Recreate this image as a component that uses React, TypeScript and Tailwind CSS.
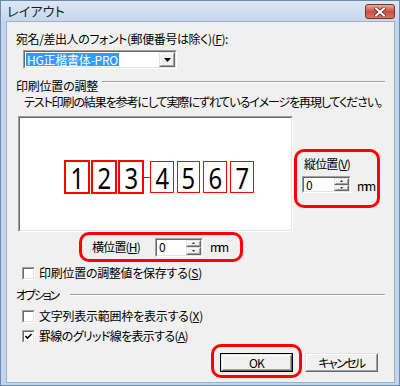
import React, { useLayoutEffect, useRef, useState } from "react";

function Fit({ w, children, className }: { w: number; children: React.ReactNode; className?: string }) {
  const ref = useRef<HTMLSpanElement>(null);
  const [ls, setLs] = useState(0);
  useLayoutEffect(() => {
    const measure = () => {
      const el = ref.current;
      if (!el) return;
      const prev = el.style.letterSpacing;
      el.style.letterSpacing = "0px";
      const natural = el.getBoundingClientRect().width;
      el.style.letterSpacing = prev;
      const n = Array.from(el.textContent ?? "").length || 1;
      setLs((w - natural) / n);
    };
    measure();
    if (document.fonts && document.fonts.ready) document.fonts.ready.then(measure);
  }, [w]);
  return (
    <span ref={ref} className={"inline-block whitespace-nowrap " + (className ?? "")} style={{ letterSpacing: `${ls}px` }}>
      {children}
    </span>
  );
}

const U = ({ c }: { c: string }) => (
  <span className="underline underline-offset-[1px] decoration-[1px]">{c}</span>
);

function Sunken({ className, children }: { className?: string; children?: React.ReactNode }) {
  return (
    <div className={"shrink-0 border border-t-[#a0a0a0] border-l-[#a0a0a0] border-b-white border-r-white " + (className ?? "")}>
      <div className="h-full w-full border border-t-[#696969] border-l-[#696969] border-b-[#e3e3e3] border-r-[#e3e3e3] bg-white flex">
        {children}
      </div>
    </div>
  );
}

function Raised({ className, children }: { className?: string; children?: React.ReactNode }) {
  return (
    <div className={"border border-t-[#e3e3e3] border-l-[#e3e3e3] border-b-[#696969] border-r-[#696969] bg-[#f0f0f0] " + (className ?? "")}>
      <div className="h-full w-full border border-t-white border-l-white border-b-[#a0a0a0] border-r-[#a0a0a0] flex items-center justify-center">
        {children}
      </div>
    </div>
  );
}

function Spin({ className }: { className?: string }) {
  return (
    <Sunken className={className}>
      <div className="flex-1 pl-[2px] flex items-center text-[12px] leading-none">0</div>
      <div className="w-[15px] flex flex-col">
        <Raised className="flex-1">
          <svg width="3" height="2" viewBox="0 0 3 2"><path d="M1.5 0 L3 2 L0 2 Z" fill="#333" /></svg>
        </Raised>
        <Raised className="flex-1">
          <svg width="3" height="2" viewBox="0 0 3 2"><path d="M0 0 L3 0 L1.5 2 Z" fill="#333" /></svg>
        </Raised>
      </div>
    </Sunken>
  );
}

function Check({ checked }: { checked?: boolean }) {
  return (
    <div className="w-[13px] h-[13px] shrink-0 border border-t-[#a0a0a0] border-l-[#a0a0a0] border-b-white border-r-white">
      <div className="w-full h-full border border-t-[#696969] border-l-[#696969] border-b-[#e3e3e3] border-r-[#e3e3e3] bg-white flex items-center justify-center">
        {checked && (
          <svg width="7" height="7" viewBox="0 0 7 7">
            <path d="M0.5 3 L2.5 5.2 L6.5 1" stroke="#000" strokeWidth="1.6" fill="none" />
          </svg>
        )}
      </div>
    </div>
  );
}

function Digit({ d }: { d: string }) {
  return (
    <span className="font-['Noto_Sans',sans-serif] text-[29px] leading-none inline-block scale-x-[0.82] text-black">
      {d}
    </span>
  );
}

function CloseBtn() {
  return (
    <div className="mt-[3px] mr-[4px] w-[30px] h-[15px] rounded-[3px] border border-[#7b3028] bg-linear-to-b from-[#e9a99c] via-[#c9503f] to-[#d9735f] flex items-center justify-center">
      <svg width="12" height="10" viewBox="0 0 12 10">
        <path d="M2 1.5 L10 8.5 M10 1.5 L2 8.5" stroke="#5b2a26" strokeWidth="3.6" strokeLinecap="square" />
        <path d="M2 1.5 L10 8.5 M10 1.5 L2 8.5" stroke="#ffffff" strokeWidth="2" strokeLinecap="square" />
      </svg>
    </div>
  );
}

export default function App() {
  return (
    <div className="w-[400px] h-[386px] flex flex-col border border-[#7089ab] bg-[#c3d5ec] font-['Noto_Sans_CJK_JP',sans-serif] text-[12px] leading-[14px] text-black [font-feature-settings:'palt'] overflow-hidden select-none">
      {/* title bar */}
      <div className="h-[20px] shrink-0 flex items-start bg-linear-to-b from-[#dce7f5] to-[#c5d7ee]">
        <div className="pl-[6px] pt-[2px] text-[13px] leading-[16px] text-[#1b1b1b]">
          <Fit w={58}>レイアウト</Fit>
        </div>
        <div className="flex-1" />
        <CloseBtn />
      </div>

      {/* body */}
      <div className="flex-1 ml-[5px] mr-[4px] mb-[2px] bg-[#f0f0f0] border border-[#9cb1cc] flex flex-col">
        <div className="ml-[9px] mt-[10px] h-[14px]">
          <Fit w={212}>宛名/差出人のフォント(郵便番号は除く)(<U c="F" />):</Fit>
        </div>

        {/* combobox */}
        <Sunken className="ml-[16px] mt-[4px] w-[154px] h-[19px]">
          <div className="flex-1 p-[1px] flex">
            <div className="w-[93px] bg-[#3399ff] text-white flex items-center pl-[1px] whitespace-nowrap">
              <Fit w={91}>HG正楷書体-PRO</Fit>
            </div>
          </div>
          <Raised className="w-[16px]">
            <svg width="7" height="4" viewBox="0 0 7 4"><path d="M0 0 L7 0 L3.5 4 Z" fill="#000" /></svg>
          </Raised>
        </Sunken>

        {/* group header */}
        <div className="ml-[9px] mr-[9px] mt-[10px] h-[14px] flex items-start">
          <div className="w-[86px] shrink-0">
            <Fit w={82}>印刷位置の調整</Fit>
          </div>
          <div className="flex-1 mt-[2px] border-t border-t-[#a0a0a0] border-b border-b-white" />
        </div>

        <div className="ml-[17px] mt-[2px] h-[14px]">
          <Fit w={358}>テスト印刷の結果を参考にして実際にずれているイメージを再現してください。</Fit>
        </div>

        {/* preview row */}
        <div className="ml-[11px] mt-[7px] h-[116px] flex items-start">
          <div className="w-[275px] h-[116px] shrink-0 border border-t-[#a0a0a0] border-l-[#a0a0a0] border-b-white border-r-white">
            <div className="w-full h-full border border-t-[#696969] border-l-[#696969] border-b-[#e3e3e3] border-r-[#e3e3e3] bg-white">
              <div className="ml-[44px] mt-[42px] h-[34px] flex items-center">
                <div className="w-[26px] h-[34px] border-2 border-[#ff0000] flex items-center justify-center"><Digit d="1" /></div>
                <div className="ml-[1px] w-[26px] h-[34px] border-2 border-[#ff0000] flex items-center justify-center"><Digit d="2" /></div>
                <div className="ml-[1px] w-[26px] h-[34px] border-2 border-[#ff0000] flex items-center justify-center"><Digit d="3" /></div>
                <div className="w-[6px] h-[1px] bg-[#ff0000]" />
                <div className="w-[24px] h-[32px] border border-[#ff0000] flex items-center justify-center"><Digit d="4" /></div>
                <div className="ml-[3px] w-[23px] h-[32px] border border-[#ff0000] flex items-center justify-center"><Digit d="5" /></div>
                <div className="ml-[3px] w-[24px] h-[32px] border border-[#ff0000] flex items-center justify-center"><Digit d="6" /></div>
                <div className="ml-[3px] w-[24px] h-[32px] border border-[#ff0000] flex items-center justify-center"><Digit d="7" /></div>
              </div>
            </div>
          </div>

          {/* vertical position */}
          <div className="ml-[1px] mt-[33px] w-[86px] h-[59px] border-[3px] border-[#ff0000] rounded-[10px] pl-[5px] pt-[5px] flex flex-col">
            <div className="ml-[2px] h-[14px]">
              <Fit w={46}>縦位置(<U c="V" />)</Fit>
            </div>
            <div className="mt-[5px] flex items-center">
              <Spin className="w-[49px] h-[17px]" />
              <div className="ml-[6px] mt-[3px]">
                <Fit w={16}>mm</Fit>
              </div>
            </div>
          </div>
        </div>

        {/* horizontal position */}
        <div className="ml-[72px] w-[164px] h-[30px] border-[3px] border-[#ff0000] rounded-[10px] pl-[10px] flex items-center">
          <div className="w-[63px]">
            <Fit w={48}>横位置(<U c="H" />)</Fit>
          </div>
          <Spin className="w-[48px] h-[19px]" />
          <div className="ml-[7px]">
            <Fit w={16}>mm</Fit>
          </div>
        </div>

        <div className="ml-[15px] mt-[4px] h-[14px] flex items-center gap-[4px]">
          <Check />
          <Fit w={163}>印刷位置の調整値を保存する(<U c="S" />)</Fit>
        </div>

        {/* options header */}
        <div className="ml-[9px] mr-[9px] mt-[8px] h-[14px] flex items-start">
          <div className="w-[54px] shrink-0">
            <Fit w={42}>オプション</Fit>
          </div>
          <div className="flex-1 mt-[6px] border-t border-t-[#a0a0a0] border-b border-b-white" />
        </div>

        <div className="ml-[15px] mt-[7px] h-[14px] flex items-center gap-[4px]">
          <Check />
          <Fit w={164}>文字列表示範囲枠を表示する(<U c="X" />)</Fit>
        </div>
        <div className="ml-[15px] mt-[6px] h-[14px] flex items-center gap-[4px]">
          <Check checked />
          <Fit w={149}>罫線のグリッド線を表示する(<U c="A" />)</Fit>
        </div>

        {/* buttons */}
        <div className="mt-[1px] ml-[204px] flex items-start">
          <div className="w-[91px] h-[34px] border-[3px] border-[#ff0000] rounded-[10px] pl-[6px] pt-[6px]">
            <div className="w-[73px] h-[19px] border border-black">
              <Raised className="w-full h-full">
                <span className="leading-none">
                  <Fit w={15}>OK</Fit>
                </span>
              </Raised>
            </div>
          </div>
          <Raised className="ml-[3px] mt-[9px] w-[73px] h-[19px]">
            <span className="leading-none">
              <Fit w={46}>キャンセル</Fit>
            </span>
          </Raised>
        </div>
      </div>
    </div>
  );
}
